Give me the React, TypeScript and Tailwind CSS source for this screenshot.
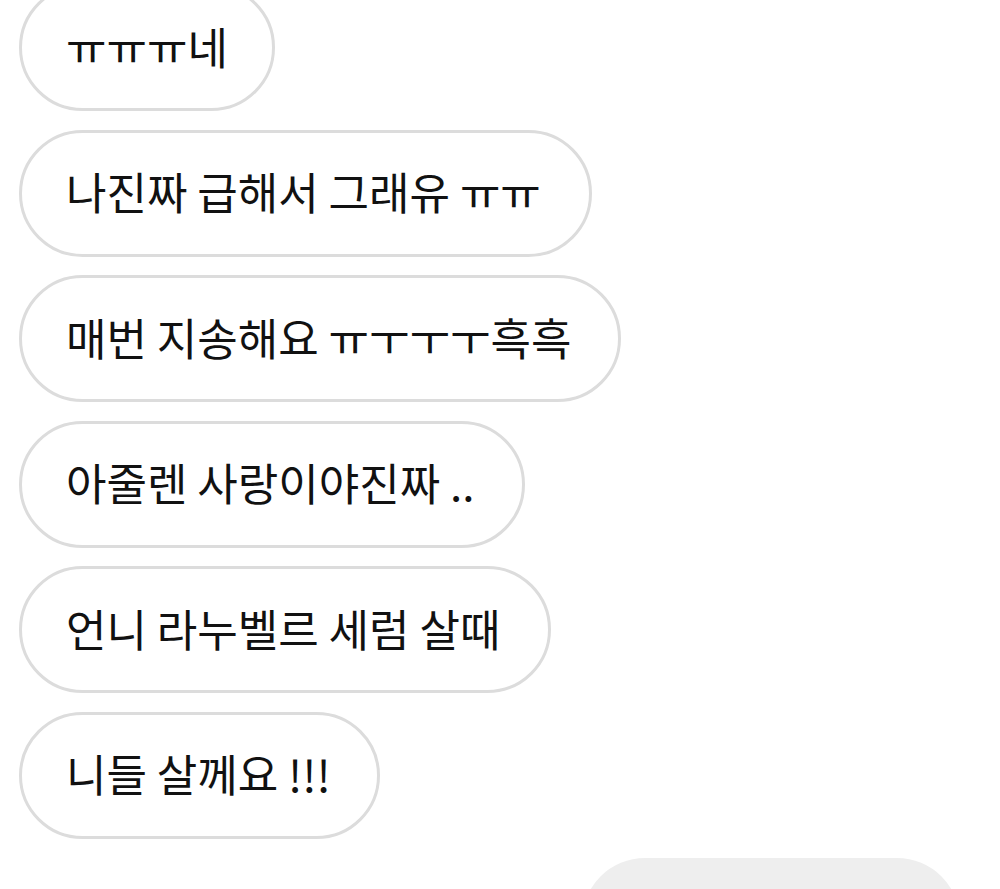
const messages = [
  { text: "ㅠㅠㅠ네", w: "w-[256px]" },
  { text: "나진짜 급해서 그래유 ㅠㅠ", w: "w-[573px]" },
  { text: "매번 지송해요 ㅠㅜㅜㅜ흑흑", w: "w-[602px]" },
  { text: "아줄렌 사랑이야진짜 ..", w: "w-[506px]" },
  { text: "언니 라누벨르 세럼 살때", w: "w-[532px]" },
  { text: "니들 살께요 !!!", w: "w-[361px]" },
]

export default function App() {
  return (
    <div className="w-[1000px] h-[889px] overflow-hidden bg-white font-['Noto_Sans_CJK_KR',sans-serif]">
      <div className="flex flex-col items-start gap-[18.5px] pl-[19px] -mt-[16px]">
        {messages.map((m, i) => (
          <div
            key={i}
            className={`${m.w} h-[127px] flex items-center pl-[44px] pb-[4px] rounded-full border-[3px] border-[#dcdcdc] bg-white text-[44px] leading-none text-[#111] whitespace-nowrap`}
          >
            {m.text}
          </div>
        ))}
      </div>
      {/* outgoing bubble, cut off at the bottom */}
      <div className="flex justify-end pr-[40px] mt-[19px]">
        <div className="w-[378px] h-[126px] rounded-full bg-[#eeeeee]" />
      </div>
    </div>
  )
}
